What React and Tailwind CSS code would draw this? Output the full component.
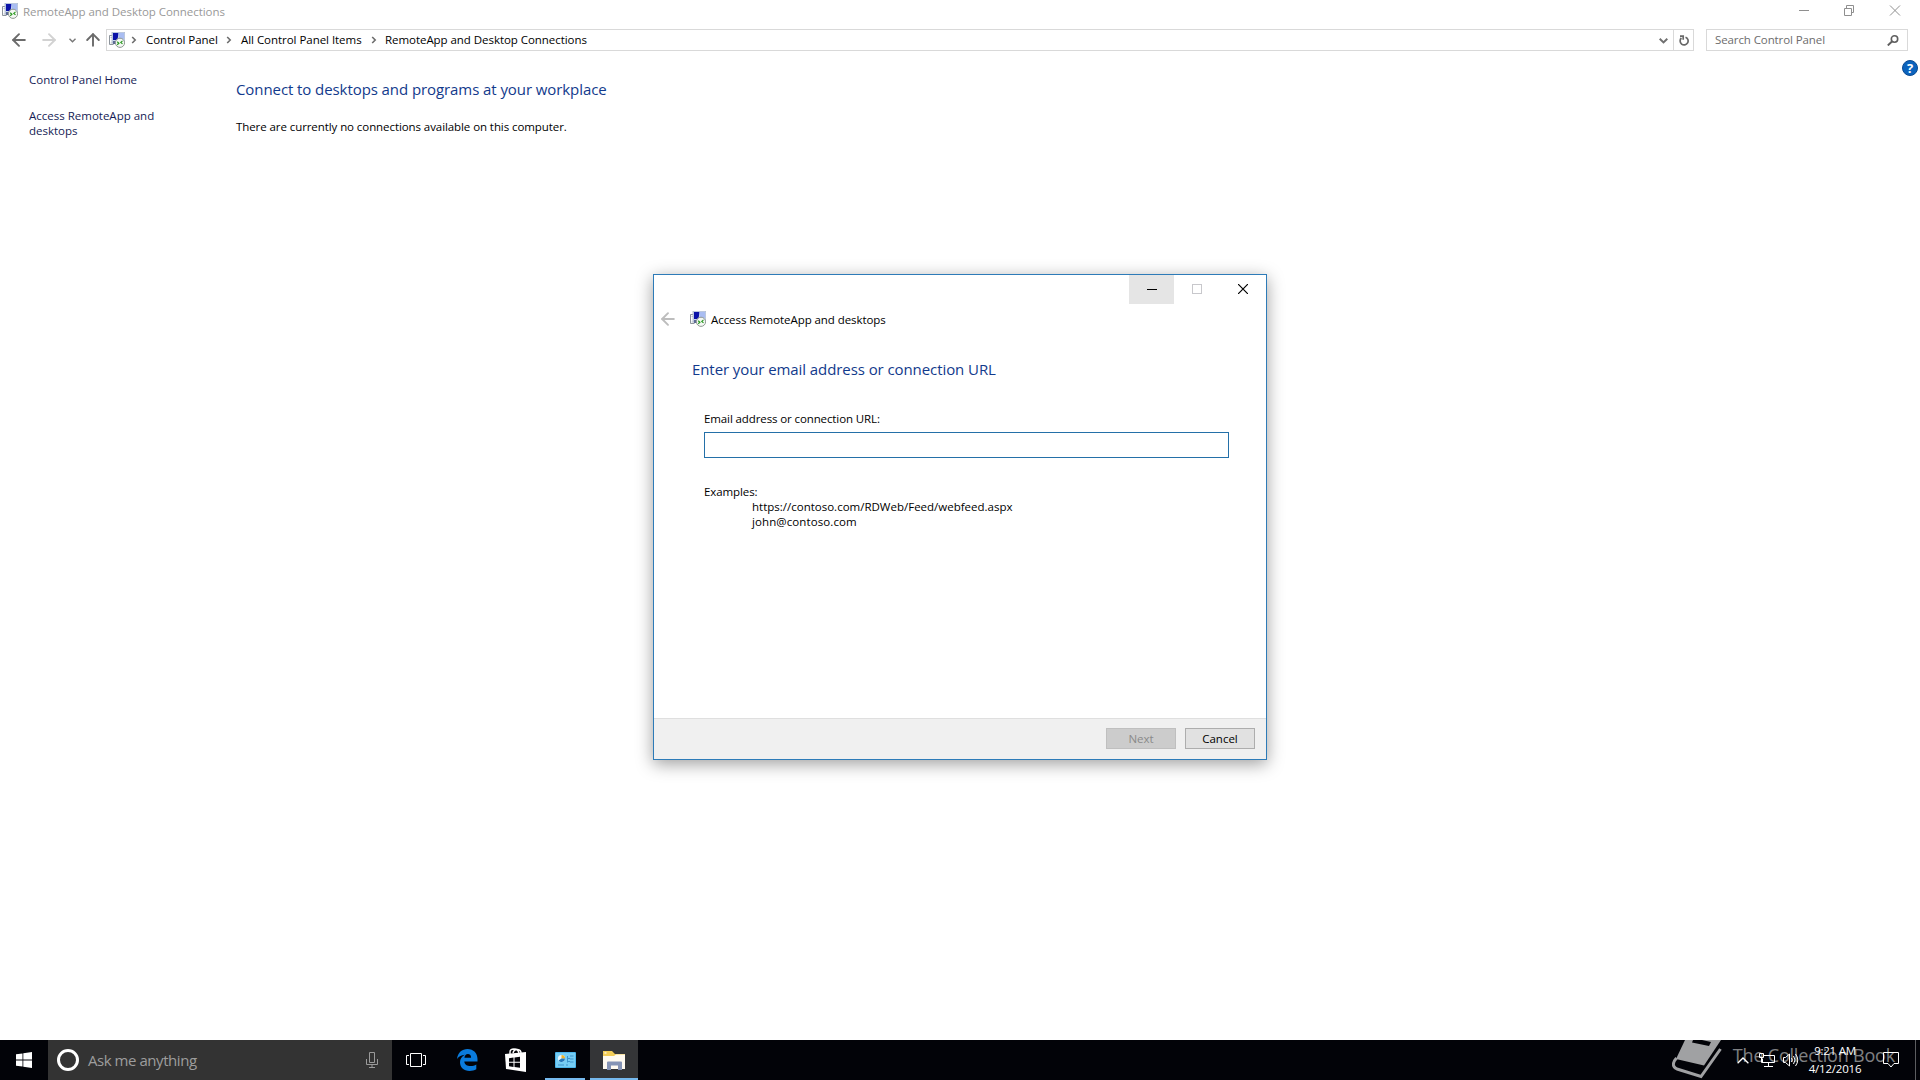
import { ArrowLeft, ArrowRight, ArrowUp } from 'lucide-react'

function RemoteAppIcon({ className = '' }) {
  return (
    <svg className={`w-4 h-4 shrink-0 ${className}`} viewBox="0 0 16 16" fill="none">
      <path d="M3.5 3.5H.5v9h4" stroke="#8d949c" />
      <path d="M1.5 5.5h2M1.5 11h3" stroke="#c3c9d0" />
      <rect x="3" y="0" width="13" height="11" fill="#c9d6ee" />
      <rect x="3" y="0" width="13" height="11" stroke="#a9b4c6" strokeWidth=".8" />
      <path d="M4 1h5.500l-1 7H4z" fill="#0a12a8" />
      <path d="M9.500 1H15v6l-5 1z" fill="#a9bdf2" />
      <path d="M4 9h4v3H4z" fill="#5d6a94" />
      <circle cx="11" cy="10.800" r="4.600" fill="#f4f7f4" stroke="#8f9892" />
      <path d="M8.200 9.800l1.700 1.500-1.700 1.500M13.500 8.900l-1.700 1.500 1.700 1.500" stroke="#2c9a22" strokeWidth="1.200" />
    </svg>
  )
}

function Chevron({ className = '' }) {
  return (
    <svg className={`w-[6px] h-2 shrink-0 ${className}`} viewBox="0 0 6 8" fill="none" stroke="#6d6d6d" strokeWidth="1.6">
      <path d="M1.2 1l3 3-3 3" />
    </svg>
  )
}

function TitleBar() {
  return (
    <div className="h-[29px] flex items-start pl-[2px] pr-[19px] text-[#999999]">
      <RemoteAppIcon className="mt-[3px]" />
      <span className="ml-[5px] mt-[3px] leading-[18px] tracking-[-0.05px]">RemoteApp and Desktop Connections</span>
      <svg className="ml-auto mt-[5px] w-[102px] h-[11px]" viewBox="0 0 102 11" fill="none" stroke="#8f8f8f">
        <path d="M0 5.5h10" />
        <path d="M45.500 3.500h7v7h-7zM47.500 3.500v-3h7v7h-2" />
        <path d="M91 .5l10 10M101 .5l-10 10" />
      </svg>
    </div>
  )
}

function AddressBar() {
  return (
    <div className="h-[22px] flex items-center pr-3 text-black">
      <ArrowLeft className="ml-[9px] w-5 h-5 text-[#6b6b6b]" strokeWidth={2.3} />
      <ArrowRight className="ml-[10px] w-5 h-5 text-[#d2d2d2]" strokeWidth={2.3} />
      <svg className="ml-[10px] w-[7px] h-[5px]" viewBox="0 0 7 5" fill="none" stroke="#777" strokeWidth="1.4">
        <path d="M.5 .8l3 3 3-3" />
      </svg>
      <ArrowUp className="ml-[7px] w-5 h-5 text-[#6b6b6b]" strokeWidth={2.3} />

      <div className="ml-[3px] w-[1588px] h-[22px] border border-[#d9d9d9] flex items-center">
        <RemoteAppIcon className="ml-[2px]" />
        <Chevron className="ml-[6px]" />
        <span className="ml-[9px] w-[72px] whitespace-nowrap leading-4 mb-px tracking-[-0.06px]">Control Panel</span>
        <Chevron className="ml-[8px]" />
        <span className="ml-[9px] w-[122px] whitespace-nowrap leading-4 mb-px tracking-[-0.04px]">All Control Panel Items</span>
        <Chevron className="ml-[8px]" />
        <span className="ml-[8px] whitespace-nowrap leading-4 mb-px tracking-[-0.05px]">RemoteApp and Desktop Connections</span>
        <svg className="ml-auto mr-[5px] mt-[2px] w-[9px] h-[6px]" viewBox="0 0 9 6" fill="none" stroke="#707070" strokeWidth="2">
          <path d="M.7 .8l3.800 3.600L8.300 .8" />
        </svg>
        <div className="w-5 h-full border-l border-[#d9d9d9] flex items-center justify-center">
          <svg className="w-[10px] h-[11px] mt-[1px]" viewBox="0 0 10 11" fill="none" stroke="#686868" strokeWidth="1.7">
            <path d="M6.500 2.200A4 4 0 1 1 2.400 3M1 1.200h3.200v3.600" />
          </svg>
        </div>
      </div>

      <div className="ml-3 w-[202px] h-[22px] border border-[#d9d9d9] flex items-center pl-2 pr-2">
        <span className="text-[#6d6d6d] leading-4 whitespace-nowrap tracking-[-0.1px]">Search Control Panel</span>
        <svg className="ml-auto w-[12px] h-[11px]" viewBox="0 0 12 11" fill="none" stroke="#5f5f5f" strokeWidth="1.6">
          <circle cx="7.500" cy="4" r="3.200" />
          <path d="M5.200 6.300L.8 10.500" strokeWidth="1.900" />
        </svg>
      </div>
    </div>
  )
}

function ControlPanel() {
  return (
    <div className="flex-1 flex items-start">
      <nav className="w-[236px] pl-[29px] pt-[21px] text-[#151c55] leading-[15px]">
        <p>Control Panel Home</p>
        <p className="mt-[21px]">Access RemoteApp and<br />desktops</p>
      </nav>
      <main className="pt-[26px]">
        <h1 className="text-[15px] leading-6 text-[#123a8c] tracking-[-0.08px]">Connect to desktops and programs at your workplace</h1>
        <p className="mt-[17px] leading-[18px] text-black tracking-[-0.08px]">There are currently no connections available on this computer.</p>
      </main>
      <div className="ml-auto mr-[2px] mt-[9px] w-4 h-4 rounded-full border border-[#0a4a92] bg-[#0b63bd] text-white text-[13px] font-bold leading-[15px] text-center">?</div>
    </div>
  )
}

function Dialog() {
  return (
    <div className="absolute left-[653px] top-[274px] w-[614px] h-[486px] bg-white border border-[#2d7bb8] shadow-[0_4px_16px_rgba(0,0,0,0.38)] flex flex-col text-black">
      <div className="h-[29px] flex justify-end">
        <div className="w-[45px] h-[29px] bg-[#e5e5e5] flex justify-center">
          <div className="mt-[14px] w-[10px] h-px bg-black" />
        </div>
        <div className="w-[45px] h-[29px] flex justify-center">
          <div className="mt-[9px] w-[10px] h-[10px] border border-[#c8c8cc]" />
        </div>
        <div className="w-[47px] h-[29px] flex justify-center">
          <svg className="mt-[9px] w-[10px] h-[10px]" viewBox="0 0 10 10" stroke="#000" strokeWidth="1.200">
            <path d="M0 0l10 10M10 0L0 10" />
          </svg>
        </div>
      </div>

      <div className="mt-[7px] h-4 flex items-center pl-[4px]">
        <ArrowLeft className="w-5 h-5 text-[#bdbdbd]" strokeWidth={2.300} />
        <RemoteAppIcon className="ml-[12px]" />
        <span className="ml-[5px] mt-[2px] tracking-[-0.07px]">Access RemoteApp and desktops</span>
      </div>

      <div className="flex-1 pl-[38px] pt-[30px]">
        <h2 className="text-[15px] leading-6 text-[#123a8c] tracking-[-0.08px]">Enter your email address or connection URL</h2>
        <div className="pl-3 pt-[30px]">
          <p className="leading-4 tracking-[-0.11px]">Email address or connection URL:</p>
          <input className="block mt-[5px] w-[525px] h-[26px] border border-[#2470a8] outline-none" />
          <p className="mt-[26px] leading-[15px] tracking-[-0.1px]">Examples:</p>
          <div className="pl-12 leading-[15px]">
            <p>https://contoso.com/RDWeb/Feed/webfeed.aspx</p>
            <p className="tracking-[0.1px]">john@contoso.com</p>
          </div>
        </div>
      </div>

      <div className="h-[41px] bg-[#f0f0f0] border-t border-[#dfdfdf] flex items-start justify-end gap-[9px] pt-[9px] pr-[11px]">
        <button className="w-[70px] h-[21px] border border-[#bfbfbf] bg-[#cccccc] text-[#8a8a8a] leading-[19px]">Next</button>
        <button className="w-[70px] h-[21px] border border-[#adadad] bg-[#e1e1e1] leading-[19px]">Cancel</button>
      </div>
    </div>
  )
}

function Watermark() {
  return (
    <div className="absolute right-[25px] bottom-0 h-10 flex items-start text-white/50 pointer-events-none">
      <svg className="w-[50px] h-10 mr-[11px]" viewBox="0 0 50 40">
        <path d="M13 0h36L32 25.500 4 19z" fill="#a0a1a3" />
        <path d="M21 0h9l9 2-2 4-17-3.500z" fill="#020308" />
        <path d="M4.500 18Q0 23 2 26.500q1 2 3 2.500l24 7.500L48.500 9" fill="none" stroke="#a0a1a3" strokeWidth="3" />
      </svg>
      <span className="mt-[2px] text-[18px] leading-[26px] whitespace-nowrap tracking-[-0.2px]">The Collection Book</span>
    </div>
  )
}

function Taskbar() {
  return (
    <footer className="relative h-10 bg-[#020308] flex items-center text-white">
      <div className="w-12 flex justify-center">
        <svg className="w-4 h-4" viewBox="0 0 16 16" fill="#fff">
          <path d="M0 2.300L6.500 1.400v6.200H0zM7.300 1.300L16 0v7.600H7.300zM0 8.400h6.500v6.200L0 13.700zM7.300 8.400H16V16l-8.700-1.300z" />
        </svg>
      </div>
      <div className="w-[344px] h-10 bg-[#333333] flex items-center pl-[9px] pr-[14px]">
        <div className="w-[22px] h-[22px] rounded-full border-[3px] border-white" />
        <span className="ml-[9px] text-[15px] leading-5 text-[#9d9d9d] tracking-[-0.45px]">Ask me anything</span>
        <svg className="ml-auto w-3 h-4" viewBox="0 0 12 16" fill="none" stroke="#9a9a9a">
          <path d="M3.500 .5h5v10h-5zM.5 7v5.500h11V7M6 12.500v3M3 15.500h6" />
        </svg>
      </div>
      <div className="w-12 flex justify-center">
        <svg className="w-5 h-[14px]" viewBox="0 0 20 14" fill="none" stroke="#fff">
          <path d="M4.500 .5h11v13h-11zM3 2.500H.5v9H3M17 2.500h2.500v9H17" />
        </svg>
      </div>
      <div className="w-[54px] flex justify-center">
        <svg className="w-[21px] h-[22px]" viewBox="0 0 21 22" fill="#0a7bdc">
          <path d="M0 10C.8 3.500 5 0 10.500 0 16.500 0 20.500 4.300 20.500 10v2.500H7.300c.2 3.200 2.900 4.600 6.200 4.600 2.200 0 4.200-.6 5.800-1.600v4.700c-1.800 1.100-4.200 1.700-6.700 1.700C6.700 21.900 3 18.500 3 13.300c0-3.300 1.700-6 4.800-7.600C4.500 5.900 1.800 7.400 0 10zm7.400-1.300h6.700C14.100 6.300 12.900 5 10.900 5 9 5 7.700 6.500 7.400 8.700z" />
        </svg>
      </div>
      <div className="w-[44px] flex justify-center">
        <svg className="w-[22px] h-6" viewBox="0 0 22 24">
          <path d="M5 7V4q0-3 4-3t5 4M8 5q1-4 4.500-3.500T16 5" fill="none" stroke="#fff" strokeWidth="1.400" />
          <path d="M0 6l21-2v20L1 21z" fill="#fff" />
          <path d="M4 10.200l4.500-.6v4.200H4zM9.500 9.500L15 8.700v5H9.500zM4 14.700h4.500v4.200L4 18.300zM9.500 14.700H15v5.100l-5.500-.7z" fill="#020308" />
        </svg>
      </div>
      <div className="ml-[7px] w-10 h-10 border-b-2 border-[#76b9ed] flex items-center justify-center">
        <svg className="w-[21px] h-4 mt-[2px]" viewBox="0 0 21 16">
          <rect width="21" height="16" rx="1" fill="#4cb5ea" />
          <rect x="1" y="1" width="19" height="14" fill="#76cdf4" />
          <circle cx="6.500" cy="6.500" r="3.600" fill="#e8f7ff" />
          <path d="M6.500 6.500V2.900a3.600 3.600 0 0 1 3.600 3.600z" fill="#f0b429" />
          <path d="M6.500 6.500h3.600a3.600 3.600 0 0 1-6.500 2z" fill="#2477b9" />
          <path d="M12.500 4v6.500M12.500 6.500H15M12.500 9.500H15M15 4h3.500M15 7h3.500M15 10h3.500M3 13h6M11 13h2" stroke="#3c93cb" />
        </svg>
      </div>
      <div className="ml-[5px] w-12 h-10 bg-[#343537] border-b-2 border-[#76b9ed] flex items-center justify-center">
        <svg className="w-[22px] h-[19px] mt-[3px]" viewBox="0 0 22 19">
          <path d="M0 0h9l3 3h10v15H0z" fill="#f3cd57" />
          <path d="M1.500 1.200h2v1.500h-2z" fill="#fff7d8" />
          <path d="M0 5h11l2-1.500h9V18H0z" fill="#fffaf0" />
          <path d="M4 19v-7.500q0-1 1-1h13q1 0 1 1V19h-4v-4.500H8V19z" fill="#8694b5" />
        </svg>
      </div>

      {/* System tray */}
      <div className="ml-auto h-10 flex items-center">
        <svg className="w-[12px] h-[7px]" viewBox="0 0 12 7" fill="none" stroke="#fff" strokeWidth="1.300">
          <path d="M.6 6.300L6 1l5.400 5.300" />
        </svg>
        <svg className="ml-[10px] w-4 h-[14px]" viewBox="0 0 16 14" fill="none" stroke="#fff">
          <path d="M5 2.500h10.500v7h-12v-4M9.500 9.500v3.500M5 13.500h9M.5 .5h4v4h-4zM2.500 4.500v5H4" />
        </svg>
        <svg className="ml-[8px] w-[16px] h-[14px]" viewBox="0 0 16 14" fill="none" stroke="#fff">
          <path d="M.5 4.500h2L6.500 1v12l-4-3.500h-2zM8.500 5q1.500 2 0 4M10.500 3q3 4 0 8M12.500 1q4.500 6 0 12" />
        </svg>
        <div className="ml-[10px] w-[52px] flex flex-col items-center whitespace-nowrap leading-[18px]">
          <p className="tracking-[-0.25px]">9:21 AM</p>
          <p className="tracking-[-0.2px]">4/12/2016</p>
        </div>
        <svg className="ml-[22px] w-4 h-4" viewBox="0 0 16 16" fill="none" stroke="#fff">
          <path d="M.5 .5h15v11h-4.500L8 15l-3-3.500H.5z" />
        </svg>
        <div className="ml-4 w-[5px] h-10 border-l border-[#5c5d60]" />
      </div>
      <Watermark />
    </footer>
  )
}

export default function App() {
  return (
    <div className="relative w-[1920px] h-[1080px] overflow-hidden bg-white flex flex-col text-[11.5px] font-['Open_Sans','Noto_Sans',sans-serif]">
      <TitleBar />
      <AddressBar />
      <ControlPanel />
      <Taskbar />
      <Dialog />
    </div>
  )
}
